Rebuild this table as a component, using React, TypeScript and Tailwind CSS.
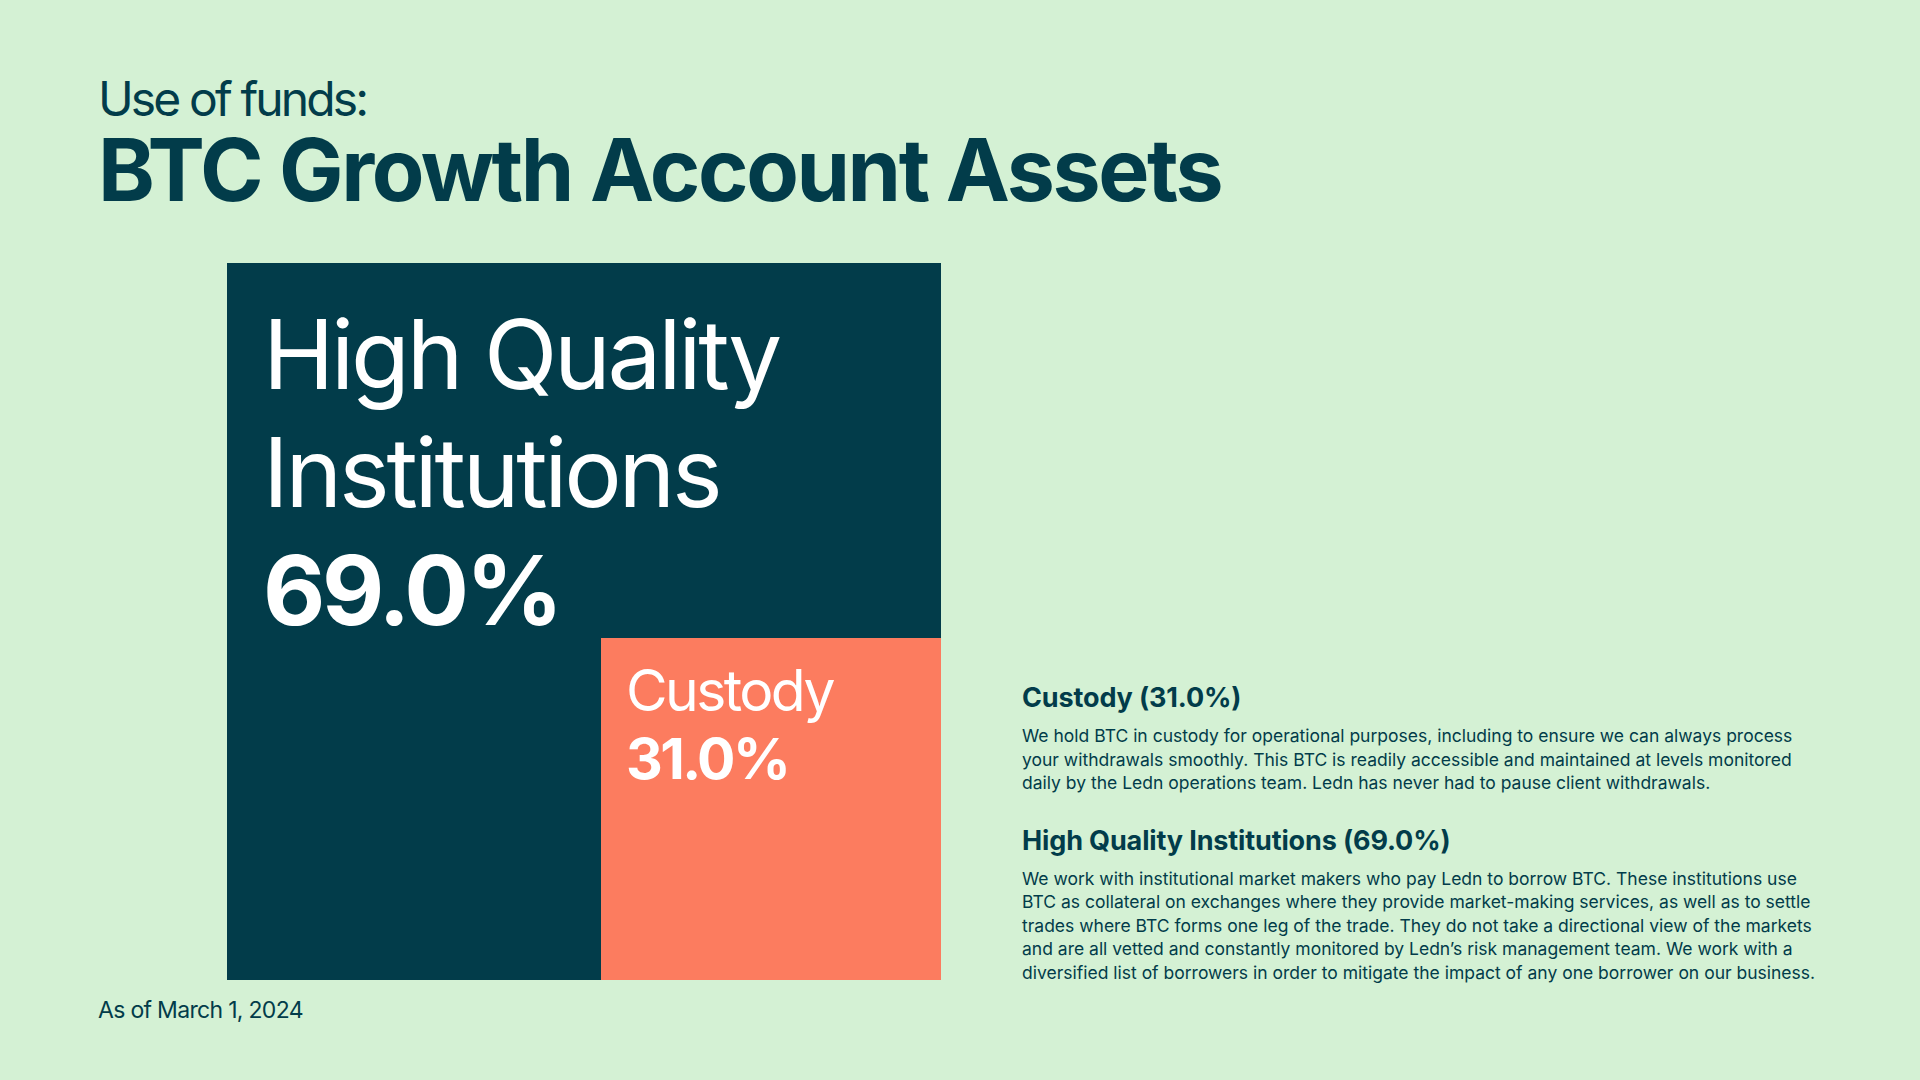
import React from "react";

// Lines are broken as on the slide so the wrap matches.
const custodyLines = [
  "We hold BTC in custody for operational purposes, including to ensure we can always process",
  "your withdrawals smoothly. This BTC is readily accessible and maintained at levels monitored",
  "daily by the Ledn operations team. Ledn has never had to pause client withdrawals.",
];

const institutionLines = [
  "We work with institutional market makers who pay Ledn to borrow BTC. These institutions use",
  "BTC as collateral on exchanges where they provide market-making services, as well as to settle",
  "trades where BTC forms one leg of the trade. They do not take a directional view of the markets",
  "and are all vetted and constantly monitored by Ledn\u2019s risk management team. We work with a",
  "diversified list of borrowers in order to mitigate the impact of any one borrower on our business.",
];

function Note({ title, lines, className = "" }: { title: string; lines: string[]; className?: string }) {
  return (
    <div className={className}>
      <h2 className="text-[27px] leading-[32px] font-bold tracking-[-0.005em]">{title}</h2>
      <p className="mt-[10px] text-[17.5px] leading-[23.5px] whitespace-nowrap">
        {lines.map((line, i) => (
          <React.Fragment key={i}>
            {line}
            {i < lines.length - 1 && <br />}
          </React.Fragment>
        ))}
      </p>
    </div>
  );
}

export default function App() {
  return (
    <main className="w-[1920px] h-[1080px] overflow-hidden bg-[#d4f1d4] text-[#023c4a] font-['Inter','Liberation_Sans',sans-serif] pl-[98px]">
      {/* Heading */}
      <div className="pt-[71px]">
        <p className="text-[48px] leading-[56px] tracking-[-0.06em]">Use of funds:</p>
        <h1 className="text-[86px] leading-[86px] font-bold tracking-[-0.028em]">
          BTC Growth Account Assets
        </h1>
      </div>

      {/* Chart + notes */}
      <div className="flex items-start mt-[50px]">
        <div className="ml-[129px] w-[714px] h-[717px] shrink-0 bg-[#023c4a] flex flex-col text-white">
          <div className="h-[375px] shrink-0 pl-[36px] pt-[32px] text-[96px] leading-[118px] tracking-[-0.034em]">
            <p>
              High Quality
              <br />
              Institutions
            </p>
            <p className="font-bold">69.0%</p>
          </div>
          <div className="self-end w-[340px] h-[342px] shrink-0 bg-[#fc7c5f] pl-[25px] pt-[19px] text-[57px] leading-[68px] tracking-[-0.045em]">
            <p>Custody</p>
            <p className="font-bold">31.0%</p>
          </div>
        </div>

        <div className="ml-[81px] mt-[419px]">
          <Note title="Custody (31.0%)" lines={custodyLines} />
          <Note className="mt-[30px]" title="High Quality Institutions (69.0%)" lines={institutionLines} />
        </div>
      </div>

      <p className="mt-[12px] text-[23px] leading-[28px] tracking-[-0.03em]">As of March 1, 2024</p>
    </main>
  );
}
